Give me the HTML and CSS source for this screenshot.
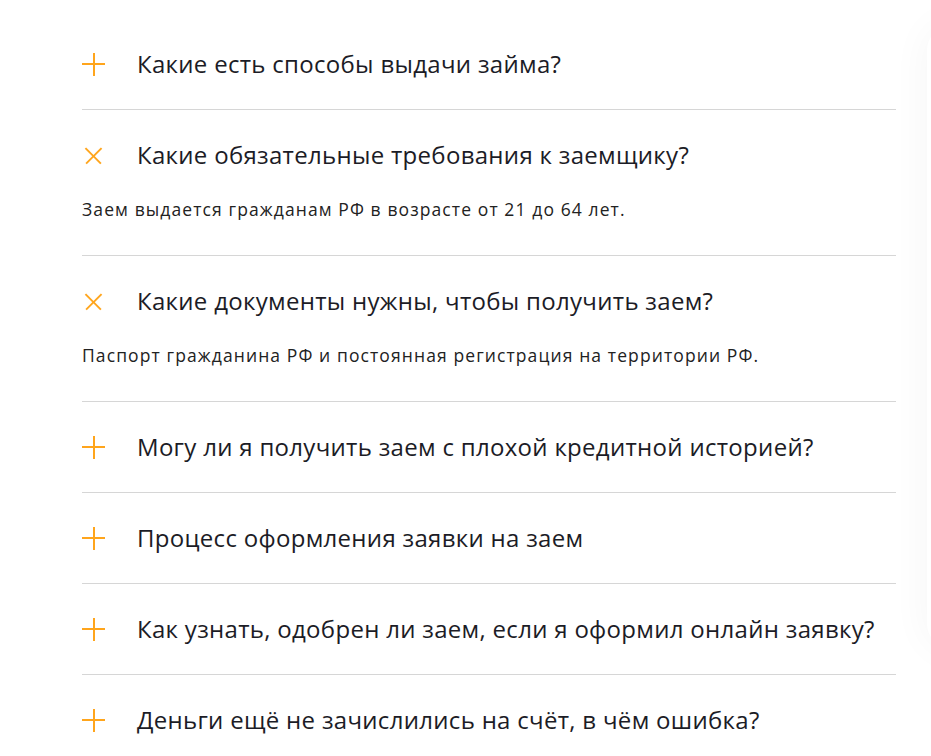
FILE: index.html
```html
<!DOCTYPE html>
<html lang="ru">
<head>
    <meta charset="UTF-8">
    <meta name="viewport" content="width=device-width, initial-scale=1.0">
    <title>Вопросы и ответы</title>
    <link rel="stylesheet" href="styles.css">
</head>
<body>
    <div class="page">
        <div class="faq">
            <div class="faq-item">
                <div class="faq-question"><span class="faq-icon"></span>Какие есть способы выдачи займа?</div>
            </div>
            <div class="faq-item open">
                <div class="faq-question"><span class="faq-icon"></span>Какие обязательные требования к заемщику?</div>
                <div class="faq-answer">Заем выдается гражданам РФ в возрасте от 21 до 64 лет.</div>
            </div>
            <div class="faq-item open">
                <div class="faq-question"><span class="faq-icon"></span>Какие документы нужны, чтобы получить заем?</div>
                <div class="faq-answer">Паспорт гражданина РФ и постоянная регистрация на территории РФ.</div>
            </div>
            <div class="faq-item">
                <div class="faq-question"><span class="faq-icon"></span>Могу ли я получить заем с плохой кредитной историей?</div>
            </div>
            <div class="faq-item">
                <div class="faq-question"><span class="faq-icon"></span>Процесс оформления заявки на заем</div>
            </div>
            <div class="faq-item">
                <div class="faq-question"><span class="faq-icon"></span>Как узнать, одобрен ли заем, если я оформил онлайн заявку?</div>
            </div>
            <div class="faq-item">
                <div class="faq-question"><span class="faq-icon"></span>Деньги ещё не зачислились на счёт, в чём ошибка?</div>
            </div>
        </div>
        <div class="side-card"></div>
    </div>
</body>
</html>
```

FILE: styles.css
```css
body {
    margin: 0;
    background-color: #fff;
    font-family: "Open Sans", "Noto Sans", sans-serif;
    color: #1c1c26;
    overflow: hidden;
}
.page {
    display: flex;
    align-items: flex-start;
    padding: 19px 0 0 82px;
}
.faq {
    flex: none;
    width: 814px;
}
.faq-item {
    border-top: 1px solid #d6d6d6;
}
.faq-item:first-child {
    border-top: none;
}
.faq-question {
    display: flex;
    align-items: center;
    padding: 30px 0;
    font-size: 24px;
    line-height: 30px;
    letter-spacing: 0.3px;
}
.faq-icon {
    position: relative;
    flex: none;
    width: 23px;
    height: 23px;
    margin-right: 32px;
}
.faq-icon::before,
.faq-icon::after {
    content: "";
    position: absolute;
    background-color: #ffa51c;
}
.faq-icon::before {
    left: 0;
    top: 10.5px;
    width: 23px;
    height: 2px;
}
.faq-icon::after {
    left: 10.5px;
    top: 0;
    width: 2px;
    height: 23px;
}
.open .faq-icon {
    transform: rotate(45deg) scale(0.95);
}
.faq-answer {
    margin-top: -3px;
    padding-bottom: 34px;
    font-size: 17.5px;
    line-height: 24px;
    letter-spacing: 1.1px;
    color: #222;
}
.side-card {
    flex: none;
    width: 300px;
    height: 622px;
    margin: 7px 0 0 31px;
    border-radius: 24px;
    background-color: #fff;
    box-shadow: 0 0 40px rgba(0, 0, 0, 0.045);
}
```
